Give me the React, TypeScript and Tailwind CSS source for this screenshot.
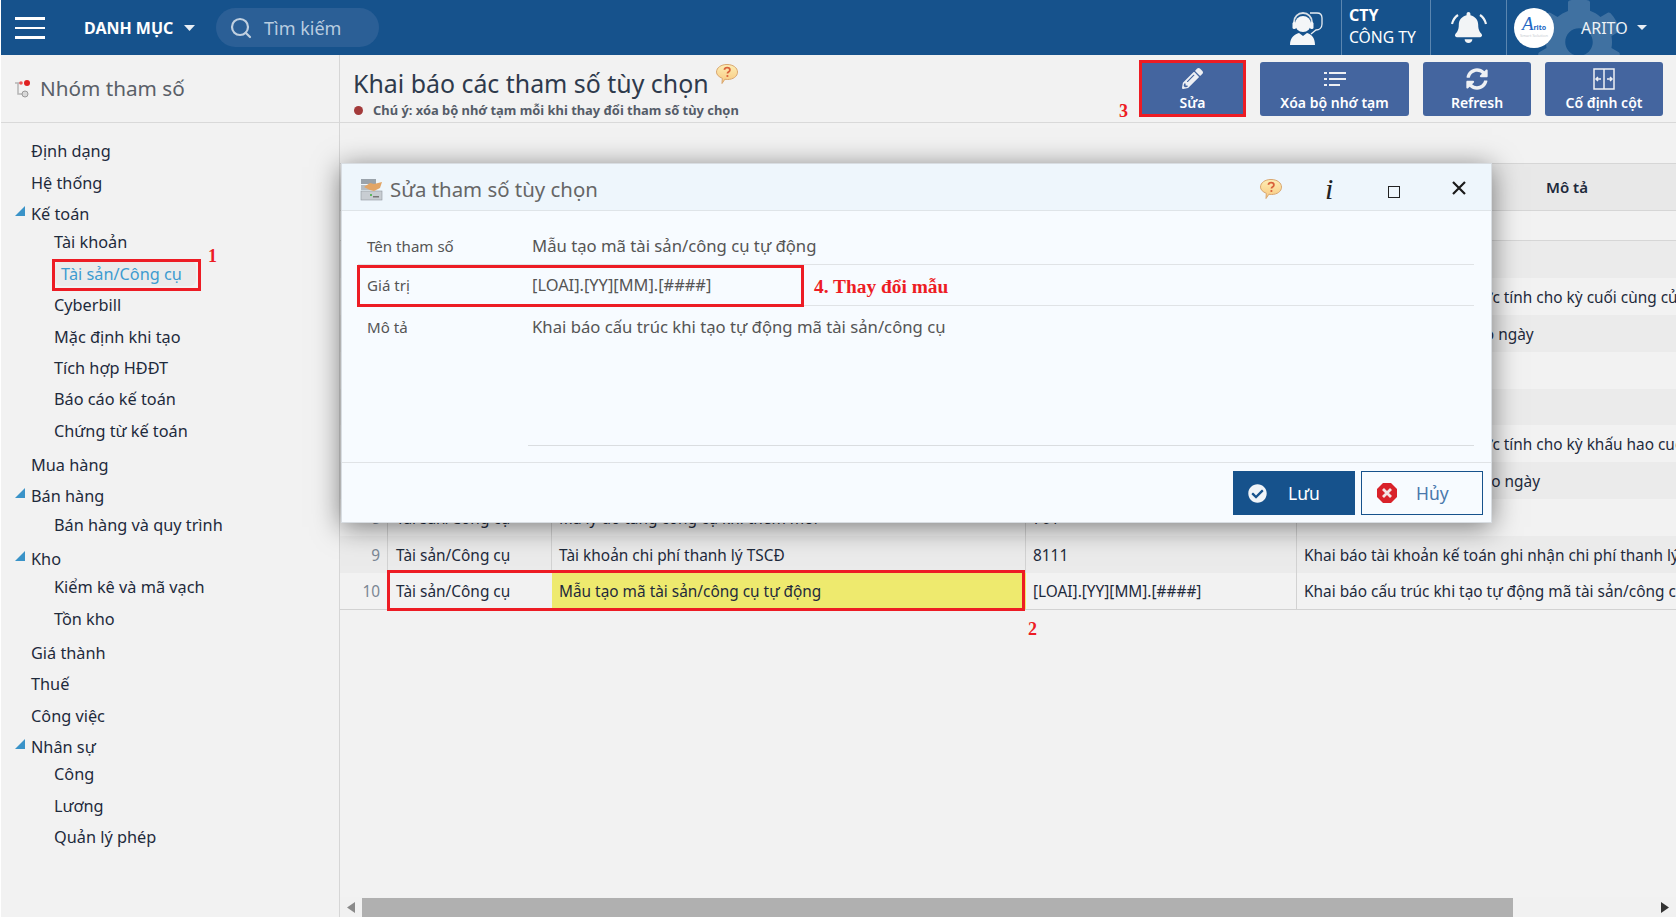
import React from "react";
import { FaPencilAlt, FaSyncAlt, FaCog, FaCheckCircle, FaBell } from "react-icons/fa";
import { Search } from "lucide-react";

function Bubble({ size = 24 }: { size?: number }) {
  return (
    <svg width={size} height={size} viewBox="0 0 24 24">
      <defs>
        <linearGradient id="bub" x1="0" y1="0" x2="0" y2="1">
          <stop offset="0" stopColor="#fdeeb5" />
          <stop offset="1" stopColor="#f8c77e" />
        </linearGradient>
      </defs>
      <path d="M12 2.500c6 0 10.500 3.200 10.500 7.600s-4.500 7.400-10 7.400c-1 0-1.800-.1-2.600-.3L7 21.500l.3-5.200C4 15 1.500 12.800 1.500 10.100 1.500 5.700 6 2.500 12 2.500z" fill="url(#bub)" stroke="#d9a66e" strokeWidth="1" />
      <path d="M9.300 7.800c.3-1.500 1.400-2.200 2.800-2.200 1.600 0 2.800.9 2.800 2.300 0 1.200-.8 1.700-1.500 2.200-.6.4-.9.8-.9 1.500" fill="none" stroke="#d9603a" strokeWidth="1.800" />
      <circle cx="12.400" cy="14" r="1.100" fill="#d9603a" />
    </svg>
  );
}

function Item({ label, depth = 0, open = false, active = false }: { label: string; depth?: number; open?: boolean; active?: boolean }) {
  if (active) {
    return (
      <div className="h-[31.4px] flex items-center pl-[54px]">
        <span className="h-[25px] w-[141px] flex items-center pl-[6px] rounded-md bg-[#ebebeb] text-[#3d9bd0]">{label}</span>
      </div>
    );
  }
  return (
    <div className={depth ? "h-[31.4px] flex items-center pl-[53px]" : "h-[31.3px] flex items-center pl-[30px] relative"}>
      {open && (
        <svg width="10" height="10" viewBox="0 0 10 10" className="absolute left-[14px] top-[7px]">
          <path d="M10 0v10H0z" fill="#3a93c8" />
        </svg>
      )}
      {label}
    </div>
  );
}

function Sidebar() {
  return (
    <aside className="w-[338px] shrink-0 border-r border-[#d6d6d6] box-content flex flex-col">
      <div className="h-[68px] border-b border-[#d9d9d9] flex items-center pl-[12px] gap-[9px] shrink-0">
        <svg width="18" height="20" viewBox="0 0 18 20">
          <path d="M2 4h7M5 4v11h5" fill="none" stroke="#b5b5b5" strokeWidth="1.500" />
          <circle cx="12" cy="15" r="3" fill="#d8d8d8" stroke="#999" />
          <circle cx="8" cy="4" r="1.800" fill="#e55" />
          <circle cx="14" cy="4" r="3" fill="#e02020" />
        </svg>
        <span className="text-[20.700px] text-[#5a6068]">Nhóm tham số</span>
      </div>
      <nav className="pt-[13px] text-[16.300px] text-[#1e2a3c] relative">
        <Item label="Định dạng" />
        <Item label="Hệ thống" />
        <Item label="Kế toán" open />
        <div className="-mt-[3px] mb-[3px]">
          <Item label="Tài khoản" depth={1} />
          <Item label="Tài sản/Công cụ" depth={1} active />
          <Item label="Cyberbill" depth={1} />
          <Item label="Mặc định khi tạo" depth={1} />
          <Item label="Tích hợp HĐĐT" depth={1} />
          <Item label="Báo cáo kế toán" depth={1} />
          <Item label="Chứng từ kế toán" depth={1} />
        </div>
        <Item label="Mua hàng" />
        <Item label="Bán hàng" open />
        <div className="-mt-[3px] mb-[3px]">
          <Item label="Bán hàng và quy trình" depth={1} />
        </div>
        <Item label="Kho" open />
        <div className="-mt-[3px] mb-[3px]">
          <Item label="Kiểm kê và mã vạch" depth={1} />
          <Item label="Tồn kho" depth={1} />
        </div>
        <Item label="Giá thành" />
        <Item label="Thuế" />
        <Item label="Công việc" />
        <Item label="Nhân sự" open />
        <div className="-mt-[4px]">
          <Item label="Công" depth={1} />
          <Item label="Lương" depth={1} />
          <Item label="Quản lý phép" depth={1} />
        </div>
        <div className="absolute left-[51px] top-[136px] w-[149px] h-[32px] border-[3px] border-[#ed1c24]" />
        <span className="absolute left-[207px] top-[120px] font-['Liberation_Serif',serif] font-bold text-[18px] text-[#ed1c24]">1</span>
      </nav>
    </aside>
  );
}

function Header() {
  return (
    <header className="h-[55px] shrink-0 bg-[#16528c] flex items-stretch text-white relative overflow-hidden">
      <div className="flex items-center pl-[14px] w-[83px]">
        <div className="w-[30px] flex flex-col gap-[7px]">
          <div className="h-[3px] bg-white" />
          <div className="h-[2px] bg-white" />
          <div className="h-[3px] bg-white" />
        </div>
      </div>
      <div className="flex items-center text-[16px] font-bold w-[132px]">
        <span>DANH MỤC</span>
        <svg width="11" height="6" viewBox="0 0 11 6" className="ml-[11px]"><path d="M0 0h11L5.500 6z" fill="#e8eef5" /></svg>
      </div>
      <div className="my-[8px] w-[163px] rounded-full bg-[#2b5f96] flex items-center pl-[13px] gap-[11px] text-[#b9cde0] text-[18px]">
        <Search size={24} strokeWidth={2.200} className="text-[#c0d0e0]" />
        <span className="mt-[1px]">Tìm kiếm</span>
      </div>
      <div className="ml-auto flex items-stretch relative">
        <div className="w-[76px] flex items-center justify-center pl-[6px]">
          <svg width="34" height="36" viewBox="0 0 34 36">
            <path d="M21 3h7c3 0 5 2 5 5v6c0 4-3 6-6 6l-5 4" fill="none" stroke="#e8edf2" strokeWidth="1.300" />
            <circle cx="14" cy="14" r="8" fill="#f4f6f8" />
            <path d="M5 15v-3a9 9 0 0118 0v3" fill="none" stroke="#d8dfe6" strokeWidth="1.800" />
            <rect x="3.500" y="12" width="3.500" height="7" rx="1.500" fill="#f4f6f8" />
            <rect x="21" y="12" width="3.500" height="7" rx="1.500" fill="#f4f6f8" />
            <path d="M1 35c0-8 5-11 9-12l4 3 4-3c4 1 8 4 8 12z" fill="#f4f6f8" />
          </svg>
        </div>
        <div className="w-[89px] border-l border-[#5b86b0] pl-[7px] flex flex-col justify-center leading-[22px]">
          <span className="text-[16px] font-bold -mt-[3px]">CTY</span>
          <span className="text-[15.700px] font-normal">CÔNG TY</span>
        </div>
        <div className="w-[77px] border-l border-r border-[#5b86b0] flex items-center justify-center relative">
          <FaBell size={31} className="text-[#f2f4f6]" />
          <svg width="36" height="14" viewBox="0 0 36 14" className="absolute top-[12px] left-[20px]">
            <path d="M1 12C2 8 4 5 7 3M35 12c-1-4-3-7-6-9" fill="none" stroke="#f2f4f6" strokeWidth="2.200" />
          </svg>
        </div>
        <div className="w-[169px] flex items-center pl-[7px] relative">
          <FaCog size={88} className="absolute left-[28px] top-[-2px] text-white opacity-[0.18]" />
          <div className="w-[40px] h-[40px] rounded-full bg-white flex flex-col items-center justify-center relative">
            <div className="flex items-baseline leading-none -mt-[3px]">
              <span className="font-['Liberation_Serif',serif] italic text-[#2467c4] text-[19px] leading-none">A</span>
              <span className="font-bold text-[#2467c4] text-[7px] leading-none">rito</span>
            </div>
            <span className="text-[#c6cbd0] text-[4px] leading-none mt-[1px] whitespace-nowrap">Smart Solution</span>
          </div>
          <span className="ml-[27px] text-[16px] text-[#eef2f6] relative">ARITO</span>
          <svg width="10" height="5" viewBox="0 0 10 5" className="ml-[9px] relative"><path d="M0 0h10L5 5z" fill="#e8eef5" /></svg>
        </div>
      </div>
    </header>
  );
}

function ToolBtn({ w, icon, label }: { w: string; icon: React.ReactNode; label: string }) {
  return (
    <button className={`${w} h-[54px] rounded-[3px] bg-[#44659f] text-white flex flex-col items-center pt-[4px] text-[14px] font-semibold leading-[20px]`}>
      <span className="h-[25px] flex items-center">{icon}</span>
      <span className="mt-[2px]">{label}</span>
    </button>
  );
}

const rows: [string, string, string][] = [
  ["Khấu hao tài sản", "", ""],
  ["Số tiền khấu hao kỳ cuối", "", "Khai báo số khấu hao được tính cho kỳ cuối cùng của tài sản"],
  ["Ngày bắt đầu tính", "", "Khai báo cách tính lãi theo ngày"],
  ["Kỳ khấu hao", "", ""],
  ["Tài khoản khấu hao", "", ""],
  ["Số tiền kỳ khấu hao", "", "Khai báo số khấu hao được tính cho kỳ khấu hao cuối cùng"],
  ["Phân bổ công cụ", "", "Khai báo cách tính phí theo ngày"],
  ["Mã lý do tăng công cụ khi thêm mới", "701", ""],
  ["Tài khoản chi phí thanh lý TSCĐ", "8111", "Khai báo tài khoản kế toán ghi nhận chi phí thanh lý tài sản cố định"],
];

function TableRow({ n, b, c, d, dark }: { n: number; b: string; c: string; d: string; dark: boolean }) {
  return (
    <div className={`h-[36.900px] flex items-center ${dark ? "bg-[#ebebeb]" : ""}`}>
      <div className="w-[48px] h-full flex items-center justify-end pr-[7px] pt-[2px] border-r border-[#d2d2d2] text-[#7b8794] box-border">{n}</div>
      <div className="w-[164px] h-full flex items-center pl-[8px] pt-[2px] border-r border-[#d2d2d2] box-border">Tài sản/Công cụ</div>
      <div className="w-[474px] h-full flex items-center pl-[7px] pt-[2px] border-r border-[#d2d2d2] box-border">{b}</div>
      <div className="w-[271px] h-full flex items-center pl-[7px] pt-[2px] border-r border-[#d2d2d2] box-border">{c}</div>
      <div className="w-[540px] h-full flex items-center pl-[7px] pt-[2px] whitespace-nowrap shrink-0">{d}</div>
    </div>
  );
}

function Table() {
  return (
    <div className="mt-[40px] text-[15.400px] text-[#1e2a3c] relative w-[1336px]">
      <div className="overflow-hidden">
        <div className="w-[1500px]">
          <div className="h-[48px] flex border-t border-b border-[#d6d6d6] bg-[#e8e8e8] font-semibold box-border text-[15px]">
            <div className="w-[48px] border-r border-[#d2d2d2]" />
            <div className="w-[164px] border-r border-[#d2d2d2]" />
            <div className="w-[474px] border-r border-[#d2d2d2]" />
            <div className="w-[271px] border-r border-[#d2d2d2]" />
            <div className="w-[540px] flex items-center justify-center">Mô tả</div>
          </div>
          <div className="h-[30px] border-b border-[#d6d6d6]" />
          {rows.map((r, i) => (
            <TableRow key={i} n={i + 1} b={r[0]} c={r[1]} d={r[2]} dark={i % 2 === 0} />
          ))}
          <div className="h-[37px] flex items-center border-b border-[#d2d2d2] box-border">
            <div className="w-[48px] h-full flex items-center justify-end pr-[7px] pt-[2px] border-r border-[#d2d2d2] text-[#7b8794] box-border">10</div>
            <div className="w-[164px] h-full flex items-center pl-[8px] pt-[2px] box-border">Tài sản/Công cụ</div>
            <div className="w-[474px] h-full flex items-center pl-[7px] pt-[2px] bg-[#eeea6e] box-border">Mẫu tạo mã tài sản/công cụ tự động</div>
            <div className="w-[271px] h-full flex items-center pl-[7px] pt-[2px] border-r border-[#d2d2d2] box-border">[LOAI].[YY][MM].[####]</div>
            <div className="w-[540px] h-full flex items-center pl-[7px] pt-[2px] whitespace-nowrap">Khai báo cấu trúc khi tạo tự động mã tài sản/công cụ tự động</div>
          </div>
        </div>
      </div>
      <div className="absolute left-[47px] top-[407px] w-[638px] h-[41px] border-[3px] border-[#ed1c24]" />
      <span className="absolute left-[688px] top-[453px] font-['Liberation_Serif',serif] font-bold text-[18px] text-[#ed1c24]">2</span>
    </div>
  );
}

function Modal() {
  return (
    <div className="absolute left-[341px] top-[163px] w-[1151px] h-[360px] bg-[#f7fbff] border border-[#d8dde2] shadow-[0_4px_26px_rgba(0,0,0,0.5)] flex flex-col text-[#555]">
      <div className="h-[47px] shrink-0 bg-[#eef6fc] border-b border-[#dfe4e8] flex items-center pl-[18px] pt-[4px]">
        <svg width="23" height="23" viewBox="0 0 23 23">
          <rect x="1" y="1" width="15" height="5" fill="#9aa3ab" />
          <rect x="1" y="7" width="15" height="5" fill="#b5bcc2" />
          <rect x="1" y="13" width="21" height="9" fill="#c8cdd2" stroke="#8f979e" strokeWidth="0.600" />
          <path d="M4 9l6-4 4 1 8-2-2 6-6 3-4-1z" fill="#e2a566" />
          <rect x="10" y="16" width="2" height="2" fill="#5fb85f" />
          <rect x="13" y="18" width="6" height="1.500" fill="#777" />
        </svg>
        <span className="ml-[7px] text-[20.400px] text-[#666]">Sửa tham số tùy chọn</span>
        <div className="ml-auto flex items-center">
          <Bubble />
          <span className="ml-[42px] w-[12px] font-['Liberation_Serif',serif] italic text-[30px] leading-none text-[#222]">i</span>
          <div className="ml-[51px] mt-[5px] w-[12px] h-[12px] border border-[#222]" />
          <svg width="14" height="14" viewBox="0 0 14 14" className="ml-[52px] mr-[25px] -mt-[3px]">
            <path d="M1 1l12 12M13 1L1 13" stroke="#1a1a1a" strokeWidth="2.200" />
          </svg>
        </div>
      </div>
      <div className="h-[251px] shrink-0 relative pl-[16px] pr-[17px]">
        <div className="h-[54px] pt-[17px] border-b border-[#e0e3e6] flex items-center">
          <span className="w-[174px] pl-[9px] text-[15.100px]">Tên tham số</span>
          <span className="text-[16.700px]">Mẫu tạo mã tài sản/công cụ tự động</span>
        </div>
        <div className="h-[41px] border-b border-[#e0e3e6] flex items-center">
          <span className="w-[174px] pl-[9px] text-[15.100px]">Giá trị</span>
          <span className="text-[16.400px]">[LOAI].[YY][MM].[####]</span>
          <span className="absolute left-[472px] top-[61px] font-['Liberation_Serif',serif] font-bold text-[19.400px] text-[#ed1c24]">4. Thay đổi mẫu</span>
        </div>
        <div className="h-[140px] flex items-start pt-[8px]">
          <span className="w-[174px] pl-[9px] text-[15.100px] pt-[2px]">Mô tả</span>
          <div className="flex-1 -ml-[4px] pl-[4px] h-full border-b border-[#dadde0] text-[16.700px]">Khai báo cấu trúc khi tạo tự động mã tài sản/công cụ</div>
        </div>
        <div className="absolute left-[15px] top-[54px] w-[447px] h-[42px] border-[3px] border-[#ed1c24]" />
      </div>
      <div className="flex-1 border-t border-[#e0e3e6] flex items-start justify-end gap-[6px] pr-[8px] pt-[8px]">
        <button className="w-[122px] h-[44px] bg-[#16528c] text-white flex items-center pl-[15px] text-[17.500px]">
          <FaCheckCircle size={19} className="text-[#f0f4f8]" />
          <span className="ml-[21px]">Lưu</span>
        </button>
        <button className="w-[122px] h-[44px] border border-[#16528c] text-[#4a78ac] flex items-center pl-[15px] text-[17.500px]">
          <svg width="20" height="20" viewBox="0 0 20 20">
            <path d="M6 0h8l6 6v8l-6 6H6l-6-6V6z" fill="#d9222a" />
            <path d="M6 6l8 8M14 6l-8 8" stroke="#f4e6e6" strokeWidth="2.800" />
          </svg>
          <span className="ml-[19px]">Hủy</span>
        </button>
      </div>
    </div>
  );
}

export default function App() {
  return (
    <div className="h-[917px] w-[1679px] bg-white overflow-hidden pl-[1px] pr-[3px] font-['Noto_Sans','Liberation_Sans',sans-serif] relative">
      <div className="h-full flex flex-col bg-[#f2f2f2]">
        <Header />
        <div className="flex-1 flex min-h-0">
          <Sidebar />
          <main className="flex-1 min-w-0 flex flex-col relative">
            <div className="h-[68px] shrink-0 border-b border-[#d9d9d9] flex">
              <div className="pl-[13px] pt-[11px] relative">
                <div className="flex items-start">
                  <h1 className="text-[24.900px] leading-[35px] text-[#2e3a4c] font-normal">Khai báo các tham số tùy chọn</h1>
                  <span className="ml-[6px] -mt-[4px]"><Bubble /></span>
                </div>
                <div className="flex items-center text-[12.900px] font-bold text-[#555c68] leading-[18px]">
                  <span className="w-[9px] h-[9px] rounded-full bg-[#a33a3a] mr-[10px] ml-[1px]" />
                  Chú ý: xóa bộ nhớ tạm mỗi khi thay đổi tham số tùy chọn
                </div>
              </div>
              <div className="ml-auto flex items-start gap-[14px] pt-[7px] pr-[13px] relative">
                <ToolBtn w="w-[107px]" label="Sửa" icon={<FaPencilAlt size={21} className="text-[#eef0f4]" />} />
                <ToolBtn
                  w="w-[149px]"
                  label="Xóa bộ nhớ tạm"
                  icon={
                    <svg width="22" height="16" viewBox="0 0 22 16" fill="#eef0f4">
                      <rect x="0" y="1" width="3" height="2" />
                      <rect x="5" y="1" width="17" height="2" />
                      <rect x="0" y="7" width="3" height="2" />
                      <rect x="5" y="7" width="17" height="2" />
                      <rect x="0" y="13" width="3" height="2" />
                      <rect x="5" y="13" width="11" height="2" />
                    </svg>
                  }
                />
                <ToolBtn w="w-[108px]" label="Refresh" icon={<FaSyncAlt size={22} className="text-[#eef0f4]" />} />
                <ToolBtn
                  w="w-[118px]"
                  label="Cố định cột"
                  icon={
                    <svg width="22" height="22" viewBox="0 0 22 22" fill="none" stroke="#eef0f4" strokeWidth="1.500">
                      <rect x="1" y="1" width="20" height="20" />
                      <path d="M11 1v20" />
                      <path d="M8 11H3m2-2l-2 2 2 2M14 11h5m-2-2l2 2-2 2" />
                    </svg>
                  }
                />
                <div className="absolute left-0 top-[5px] w-[107px] h-[57px] border-[3px] border-[#ed1c24]" />
                <span className="absolute left-[-20px] top-[43px] font-['Liberation_Serif',serif] font-bold text-[18px] text-[#ed1c24]">3</span>
              </div>
            </div>
            <Table />
            <div className="mt-auto h-[20px] shrink-0 bg-[#f1f1f1] flex items-center">
              <div className="w-[22px] flex justify-center">
                <svg width="8" height="11" viewBox="0 0 8 11"><path d="M8 0v11L0 5.500z" fill="#8a8a8a" /></svg>
              </div>
              <div className="w-[1151px] h-[19px] mt-[1px] bg-[#b0b0b0]" />
              <div className="ml-auto w-[22px] flex justify-center">
                <svg width="8" height="11" viewBox="0 0 8 11"><path d="M0 0v11l8-5.500z" fill="#333" /></svg>
              </div>
            </div>
          </main>
        </div>
      </div>
      <Modal />
    </div>
  );
}
